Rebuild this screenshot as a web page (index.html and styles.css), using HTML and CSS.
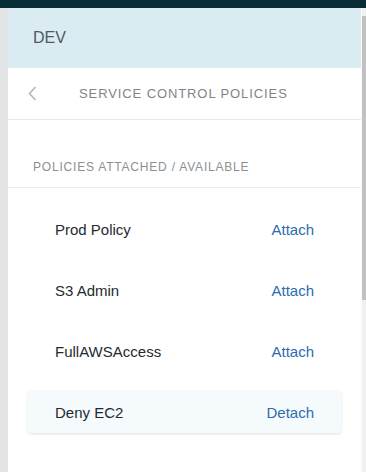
FILE: index.html
```html
<!DOCTYPE html>
<html lang="en">
<head>
  <meta charset="UTF-8" />
  <meta name="viewport" content="width=device-width, initial-scale=1.0"/>
  <title>Service Control Policies</title>
  <link rel="stylesheet" href="styles.css">
</head>
<body>
  <div class="topbar"></div>
  <div class="layout">
    <div class="gutter"></div>
    <div class="panel">
      <div class="account">DEV</div>
      <div class="nav">
        <svg class="back" width="9" height="15" viewBox="0 0 9 15"><path d="M7.5 1 L1.5 7.5 L7.5 14" fill="none" stroke="#b0b4b6" stroke-width="1.5"/></svg>
        <span class="nav-title">SERVICE CONTROL POLICIES</span>
      </div>
      <div class="section">POLICIES ATTACHED / AVAILABLE</div>
      <div class="policies">
        <div class="policy"><span class="name">Prod Policy</span><a class="action" href="#">Attach</a></div>
        <div class="policy"><span class="name">S3 Admin</span><a class="action" href="#">Attach</a></div>
        <div class="policy"><span class="name">FullAWSAccess</span><a class="action" href="#">Attach</a></div>
        <div class="policy attached"><span class="name">Deny EC2</span><a class="action" href="#">Detach</a></div>
      </div>
    </div>
    <div class="scrollbar"><div class="thumb"></div></div>
  </div>
</body>
</html>
```

FILE: styles.css
```css
html, body { margin: 0; height: 100%; }
body { background: #e3e4e5; font-family: "Liberation Sans", Arial, sans-serif; overflow: hidden; }
.topbar { height: 8px; background: #062d36; }
.layout { display: flex; height: 464px; }
.gutter { width: 8px; flex: none; }
.panel { width: 353px; flex: none; background: #fff; }
.account { height: 60px; background: #daecf1; color: #4b5a61; font-size: 16px; display: flex; align-items: center; padding-left: 25px; }
.nav { height: 51px; display: flex; align-items: center; border-bottom: 1px solid #e9eaeb; }
.back { margin-left: 20px; }
.nav-title { margin-left: 42px; color: #7f8589; font-size: 13px; letter-spacing: 0.9px; }
.section { padding: 40px 0 12px 25px; height: 15px; color: #8c9093; font-size: 12px; letter-spacing: 0.8px; border-bottom: 1px solid #ebeced; }
.policies { display: flex; flex-direction: column; gap: 19px; padding: 20px 20px; }
.policy { height: 42px; display: flex; align-items: center; justify-content: space-between; padding: 0 27px; font-size: 15px; border-radius: 3px; }
.name { color: #1f2a30; }
.action { color: #2e6bb0; text-decoration: none; }
.policy.attached { background: #f5fbfc; box-shadow: 0 1px 3px rgba(0, 0, 0, 0.12); }
.scrollbar { width: 5px; flex: none; background: #f1f1f1; border-left: 1px solid #fafafa; }
.thumb { margin-top: 8px; height: 284px; background: #c1c1c1; }
```
